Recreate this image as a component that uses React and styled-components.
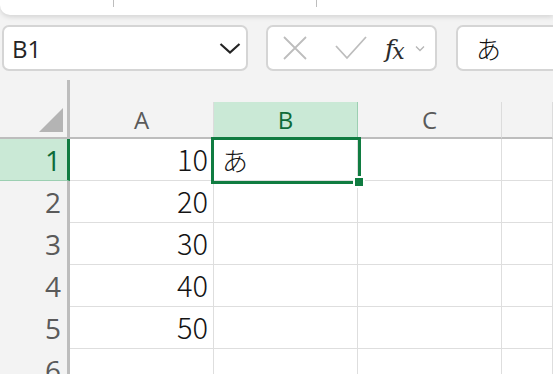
import React from "react";
import styled, { createGlobalStyle, css } from "styled-components";

const GlobalStyle = createGlobalStyle`
  html, body {
    margin: 0;
    padding: 0;
    background: #f3f3f3;
    overflow: hidden;
    width: 553px;
    height: 374px;
  }
  body {
    font-family: "Open Sans", "Liberation Sans", sans-serif;
  }
`;

const green = "#107c41";
const greenSoft = "#cae9d6";

const Page = styled.div`
  width: 553px;
  height: 374px;
  overflow: hidden;
`;

const Ribbon = styled.div`
  height: 15px;
  background: #fff;
  border-bottom-left-radius: 10px;
  box-shadow: 0 2px 5px rgba(0, 0, 0, 0.13);
  display: flex;
  padding-left: 113px;
  gap: 202px;
`;

const RibbonSep = styled.div`
  width: 1px;
  height: 7px;
  background: #bdbdbd;
`;

const FormulaBar = styled.div`
  display: flex;
  gap: 18px;
  padding: 10px 0 0 2px;
  height: 46px;
`;

const Box = styled.div`
  box-sizing: border-box;
  height: 46px;
  background: #fff;
  border: 2px solid #d5d5d5;
  border-radius: 7px;
  display: flex;
  align-items: center;
`;

const NameBox = styled(Box)`
  width: 246px;
  padding: 0 5px 0 8px;
  justify-content: space-between;
  font-size: 24px;
  color: #242424;
`;

const FxBox = styled(Box)`
  width: 171px;
  padding-left: 15px;
`;

const InputBox = styled(Box)`
  flex: 1;
  margin-left: 1px;
  margin-right: -20px;
  padding-left: 18px;
  font-family: "Noto Sans CJK JP", sans-serif;
  font-weight: 300;
  font-size: 25px;
  color: #111;
`;

const Icon = styled.svg`
  flex: none;
  margin-left: ${(p) => p.$ml || 0}px;
`;

const Fx = styled.span`
  margin-left: 18px;
  font-family: "DejaVu Serif", "Liberation Serif", serif;
  font-style: italic;
  color: #2b2b2b;
  font-size: 25px;
  line-height: 1;
  letter-spacing: -2px;
  small {
    font-size: 22px;
    position: relative;
    top: 2px;
  }
`;

const Sheet = styled.div`
  margin-top: 9px;
  display: grid;
  grid-template-columns: 70px 144px 144px 144px 1fr;
  grid-template-rows: 59px;
  grid-auto-rows: 42px;
`;

const Corner = styled.div`
  box-sizing: border-box;
  border-right: 3px solid #bdbdbd;
  border-bottom: 2px solid #bdbdbd;
  display: flex;
  align-items: flex-end;
  justify-content: flex-end;
  padding: 0 4px 5px 0;
`;

const ColHead = styled.div`
  box-sizing: border-box;
  margin-top: 22px;
  border-right: 1px solid #dcdcdc;
  border-bottom: 2px solid #bdbdbd;
  display: flex;
  align-items: center;
  justify-content: center;
  font-size: 24px;
  color: #5a5a5a;
  ${(p) =>
    p.$active &&
    css`
      background: ${greenSoft};
      color: #0e6b38;
      border-right-color: #9ccfb2;
      border-bottom-color: ${green};
    `}
`;

const RowHead = styled.div`
  box-sizing: border-box;
  border-right: 3px solid #bdbdbd;
  display: flex;
  align-items: center;
  justify-content: flex-end;
  padding-right: 6px;
  font-size: 28px;
  color: #5a5a5a;
  ${(p) =>
    p.$active &&
    css`
      background: ${greenSoft};
      color: #0e6b38;
      border-right-color: ${green};
      border-bottom: 1px solid #9ccfb2;
    `}
`;

const Cell = styled.div`
  position: relative;
  box-sizing: border-box;
  background: #fff;
  border-right: 1px solid #dedede;
  border-bottom: 1px solid #dedede;
  display: flex;
  align-items: center;
  justify-content: ${(p) => (p.$num ? "flex-end" : "flex-start")};
  padding: ${(p) => (p.$num ? "0 5px 4px 0" : "0 0 0 8px")};
  font-family: "Noto Sans CJK JP", "Liberation Sans", sans-serif;
  font-weight: 300;
  font-size: ${(p) => (p.$num ? 29 : 26)}px;
  color: #141414;
`;

const Selection = styled.div`
  position: absolute;
  top: -2px;
  left: -3px;
  width: 150px;
  height: 47px;
  box-sizing: border-box;
  border: 3px solid ${green};
  z-index: 2;
  pointer-events: none;
`;

const FillHandle = styled.div`
  position: absolute;
  left: 139px;
  top: 37px;
  width: 8px;
  height: 8px;
  background: ${green};
  border: 2px solid #fff;
  z-index: 3;
`;

const values = [10, 20, 30, 40, 50, null];

export default function App() {
  return (
    <Page>
      <GlobalStyle />
      <Ribbon>
        <RibbonSep />
        <RibbonSep />
      </Ribbon>
      <FormulaBar>
        <NameBox>
          <span>B1</span>
          <Icon width="22" height="12" viewBox="0 0 22 12">
            <polyline points="1.5,2 11,10.5 20.5,2" fill="none" stroke="#242424" strokeWidth="2.2" />
          </Icon>
        </NameBox>
        <FxBox>
          <Icon width="24" height="24" viewBox="0 0 24 24">
            <path d="M1 1 L23 23 M23 1 L1 23" stroke="#bdbdbd" strokeWidth="1.8" fill="none" />
          </Icon>
          <Icon $ml={28} width="32" height="24" viewBox="0 0 32 24">
            <polyline points="1,10 12,22 31,1" fill="none" stroke="#bdbdbd" strokeWidth="1.8" />
          </Icon>
          <Fx>
            f<small>x</small>
          </Fx>
          <Icon $ml={12} width="10" height="7" viewBox="0 0 10 7">
            <polyline points="1,1.5 5,5.5 9,1.5" fill="none" stroke="#b5b5b5" strokeWidth="1.3" />
          </Icon>
        </FxBox>
        <InputBox>あ</InputBox>
      </FormulaBar>
      <Sheet>
        <Corner>
          <svg width="24" height="24" viewBox="0 0 24 24">
            <polygon points="24,0 24,24 0,24" fill="#b4b4b4" />
          </svg>
        </Corner>
        <ColHead>A</ColHead>
        <ColHead $active>B</ColHead>
        <ColHead>C</ColHead>
        <ColHead />
        {values.map((v, i) => (
          <React.Fragment key={i}>
            <RowHead $active={i === 0}>{i + 1}</RowHead>
            <Cell $num>{v}</Cell>
            <Cell>
              {i === 0 && (
                <>
                  あ
                  <Selection />
                  <FillHandle />
                </>
              )}
            </Cell>
            <Cell />
            <Cell />
          </React.Fragment>
        ))}
      </Sheet>
    </Page>
  );
}
